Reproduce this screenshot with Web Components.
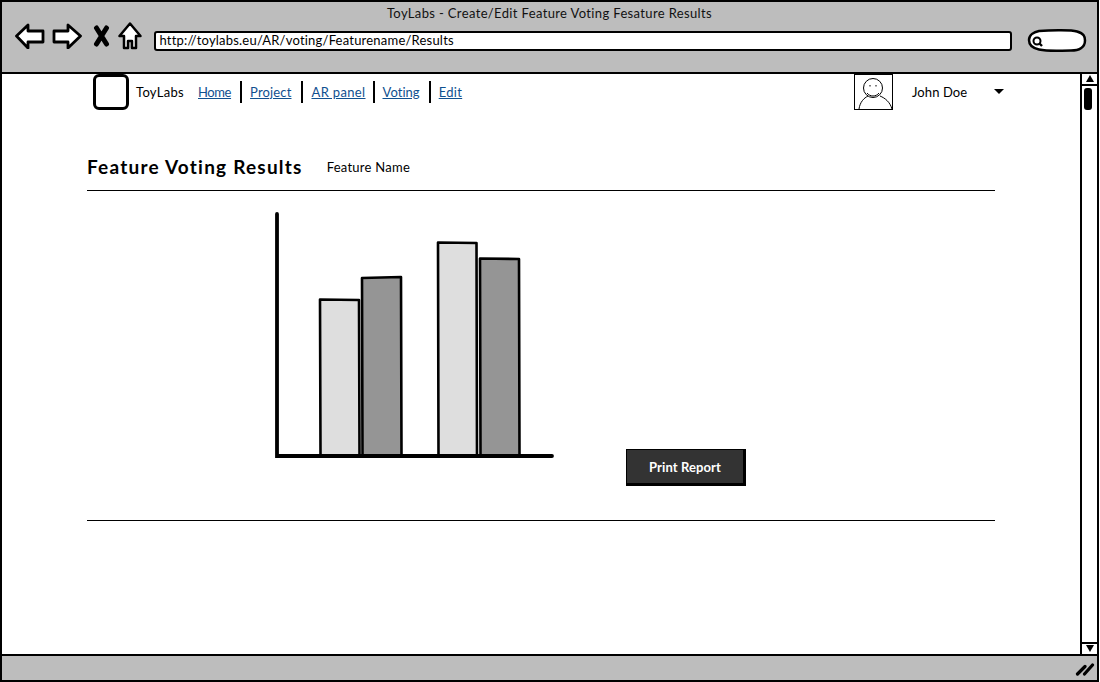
<!DOCTYPE html>
<html lang="en"><head><meta charset="utf-8"><title>ToyLabs</title>
<style>
html,body{margin:0;padding:0;background:#fff}
body{font-family:"Lato","Open Sans",sans-serif;color:#000;width:1100px;height:682px;overflow:hidden}
</style></head><body>
<browser-window>
  <span slot="title">ToyLabs - Create/Edit Feature Voting Fesature Results</span>
  <span slot="url">http://toylabs.eu/AR/voting/Featurename/Results</span>
  <top-nav></top-nav>
  <page-heading title-text="Feature Voting Results" sub-text="Feature Name"></page-heading>
  <results-panel><sketch-button>Print Report</sketch-button></results-panel>
</browser-window>
<script>
function def(name, html){
  customElements.define(name, class extends HTMLElement{
    constructor(){super();const r=this.attachShadow({mode:'open'});
      r.innerHTML=html;}
    connectedCallback(){
      const h=this.shadowRoot.querySelector('h1'),s=this.shadowRoot.querySelector('.sub');
      if(h)h.textContent=this.getAttribute('title-text');
      if(s)s.textContent=this.getAttribute('sub-text');
    }
  });
}
def('browser-window',`<style>
:host{display:flex;flex-direction:column;box-sizing:border-box;width:1099px;height:681.500px;border:2.500px solid #000;border-right-width:2px;background:#fff}
.head{height:69.500px;background:#bdbdbd;border-bottom:2.500px solid #000;display:flex;flex-direction:column;flex:none}
.title{font-size:13px;letter-spacing:.36px;text-align:center;padding-top:3px;height:19px;line-height:17px;box-sizing:border-box;color:#111}
.tools{display:flex;align-items:center;padding-left:13px;margin-top:3px;height:30px}
.tools svg{display:block;flex:none;margin-bottom:6px}
.url{flex:none;margin:4px 0 0 12px;width:850px;height:16px;border:2.500px solid #000;border-radius:3px;background:#fff;font-size:13px;line-height:15px;padding-left:3.500px;letter-spacing:.21px;box-sizing:content-box}
.tools svg.search{margin:4px 0 0 15px}
.mid{flex:1;display:flex;min-height:0}
.main{flex:1;min-width:0;display:flex;flex-direction:column}
.foot{flex:none;height:24px;background:#bdbdbd;border-top:2.500px solid #000;display:flex;justify-content:flex-end;align-items:center;padding-right:2px}
</style>
<div class="head">
 <div class="title"><slot name="title"></slot></div>
 <div class="tools">
  <svg width="30" height="26" viewBox="0 0 30 26"><path d="M1.500 13 13 2v6h15v11H13v6z" fill="#fff" stroke="#000" stroke-width="2.800" stroke-linejoin="round"/></svg>
  <svg width="30" height="26" viewBox="0 0 30 26" style="margin-left:7px"><path d="M28.500 13 16 2v6H2v11h14v6z" fill="#fff" stroke="#000" stroke-width="2.800" stroke-linejoin="round"/></svg>
  <svg width="17" height="22" viewBox="0 0 17 22" style="margin-left:11px"><path d="M3.500 3 13.500 19M13.500 3 3.500 19" stroke="#000" stroke-width="5" stroke-linecap="round"/></svg>
  <svg width="24" height="28" viewBox="0 0 24 28" style="margin-left:8px"><path d="M12 1.500 1.500 14H6v12h4v-7h4v7h4V14h4.500z" fill="#fff" stroke="#000" stroke-width="2.500" stroke-linejoin="round"/></svg>
  <div class="url"><slot name="url"></slot></div>
  <svg class="search" width="60" height="24" viewBox="0 0 60 24"><path d="M12 2C25 1 45 1 50 2.500c7 2 8 5 8 9 0 7-6 10-14 10-12 0-22 1-32-1C5 19 2 16 2 11 2 6 7 3 12 2z" fill="#fff" stroke="#000" stroke-width="2.500"/><circle cx="10" cy="12" r="3.500" fill="none" stroke="#000" stroke-width="2"/><path d="m12.500 14.500 2.500 2.500" stroke="#000" stroke-width="2.400"/></svg>
 </div>
</div>
<div class="mid"><div class="main"><slot></slot></div><sketch-scrollbar></sketch-scrollbar></div>
<div class="foot"><svg width="20" height="16" viewBox="0 0 20 16"><path d="M2.500 14 10 6.500M9.500 14 17.500 5" stroke="#000" stroke-width="3.200" stroke-linecap="round"/></svg></div>`);
def('sketch-scrollbar',`<style>
:host{display:flex;flex-direction:column;flex:none;box-sizing:border-box;width:17px;border-left:2px solid #000;background:#fff}
.btn{height:10px;border-bottom:2px solid #000;display:flex;align-items:center;justify-content:center;flex:none}
.btn.d{border-bottom:0;border-top:2px solid #000}
.tri{width:0;height:0;border-left:4.500px solid transparent;border-right:4.500px solid transparent}
.u{border-bottom:7px solid #000}.dn{border-top:7px solid #000}
.track{flex:1;padding:2px 4px 0 2px}
.thumb{width:8px;height:22px;background:#000;border-radius:3px}
</style><div class="btn"><div class="tri u"></div></div><div class="track"><div class="thumb"></div></div><div class="btn d"><div class="tri dn"></div></div>`);
def('top-nav',`<style>
:host{display:flex;align-items:center;height:36px;padding:0 76px 0 91px;flex:none;font-size:13px}
.logo{width:30px;height:30px;border:3px solid #000;border-radius:6px;flex:none}
.brand{margin-left:7px;letter-spacing:.3px;width:62px;flex:none}
.links{display:flex;align-items:center}
a{color:#10508f;text-decoration:underline;padding:0 9px 0 8px;line-height:22px;height:22px;border-left:2px solid #000}
a:nth-child(1){border-left:0;padding-left:0;letter-spacing:-.4px}
a:nth-child(2){letter-spacing:.15px;padding-right:10px}
a:nth-child(3){letter-spacing:.35px;padding-right:7px}
a:nth-child(4){letter-spacing:.05px}
a:nth-child(5){letter-spacing:.3px}
.user{margin-left:auto;display:flex;align-items:center}
.user svg{display:block}
.name{margin-left:19px;width:82px;letter-spacing:.1px}
.tri{width:0;height:0;border-left:5px solid transparent;border-right:5px solid transparent;border-top:5px solid #000}
</style>
<div class="logo"></div><div class="brand">ToyLabs</div>
<nav class="links"><a href="#">Home</a><a href="#">Project</a><a href="#">AR panel</a><a href="#">Voting</a><a href="#">Edit</a></nav>
<div class="user">
<svg width="39" height="36" viewBox="0 0 39 36"><rect x=".5" y=".5" width="38" height="35" fill="#fff" stroke="#000"/><circle cx="19" cy="14" r="9.500" fill="none" stroke="#000"/><path d="M16 11v1.500M22 11v1.500M13 19c3 4 9 4 12 0" fill="none" stroke="#000"/><path d="M5 35C6 28 10 24 14 22M38 35C36 28 31 24 26 22" fill="none" stroke="#000"/></svg>
<span class="name">John Doe</span><div class="tri"></div></div>`);
def('page-heading',`<style>
:host{display:flex;align-items:center;box-sizing:border-box;margin:46px 0 0 85px;width:908px;height:35.500px;padding-bottom:12px;border-bottom:1.500px solid #000;flex:none}
h1{margin:0;font-size:19px;font-weight:700;letter-spacing:1.22px;line-height:22px}
.sub{font-size:13px;letter-spacing:.25px;margin-left:24px}
</style><h1></h1><span class="sub"></span>`);
def('results-panel',`<style>
:host{display:flex;box-sizing:border-box;margin:0 0 0 85px;width:908px;height:330px;border-bottom:1.500px solid #000;padding:20.500px 0 0 185px;flex:none;align-items:flex-start}
svg{display:block;flex:none}
.act{margin:237px 0 0 70px}
</style>
<svg width="284" height="250" viewBox="0 0 284 250">
<g stroke="#000" stroke-width="2.600" stroke-linejoin="round">
<path d="M48 87.500 87 88 87.500 243.500H48.500z" fill="#dedede"/>
<path d="M90 66 129 65 129.500 243.500H90.500z" fill="#959595"/>
<path d="M166 30.500 204.500 31 205 243.500H166.500z" fill="#dedede"/>
<path d="M208 46.500 247 47 247.500 243.500H208.500z" fill="#959595"/>
</g>
<path d="M5 2V244H280" fill="none" stroke="#000" stroke-width="3.800" stroke-linecap="round"/>
</svg>
<div class="act"><slot></slot></div>`);
def('sketch-button',`<style>
:host{display:block}
button{display:block;box-sizing:border-box;width:120px;height:37px;background:#333;color:#fff;border:0;border-top:1.500px solid #000;border-left:1.500px solid #000;border-right:3px solid #000;border-bottom:3px solid #000;font:700 13px "Lato","Open Sans",sans-serif;letter-spacing:.1px;padding:1px 0 0}
</style><button><slot></slot></button>`);
</script>
</body></html>
